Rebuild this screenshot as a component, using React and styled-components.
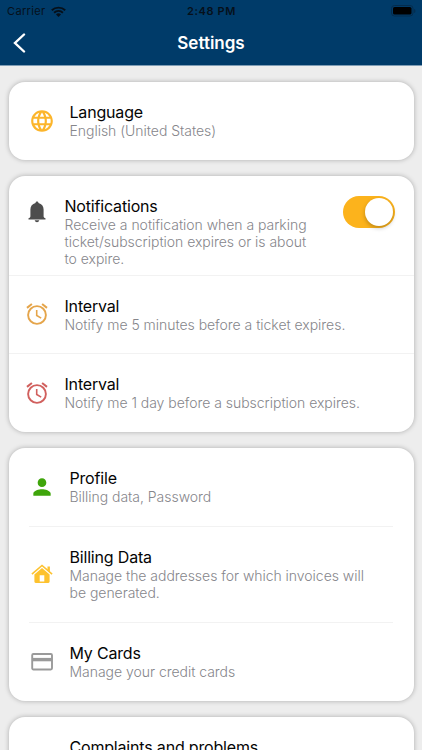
import React, { useState } from 'react';
import styled, { createGlobalStyle } from 'styled-components';
import { MdLanguage, MdPerson } from 'react-icons/md';

const GlobalStyle = createGlobalStyle`
  * {
    box-sizing: border-box;
  }

  body {
    margin: 0;
    background: #ededed;
    font-family: Inter, 'Liberation Sans', sans-serif;
  }
`;

const Screen = styled.div`
  height: 750px;
  overflow: hidden;
  background: #ededed;
`;

const Header = styled.header`
  height: 66px;
  background: #003b69;
  border-bottom: 1px solid #7f9db5;
`;

const StatusBar = styled.div`
  display: grid;
  grid-template-columns: 1fr auto 1fr;
  align-items: center;
  height: 22px;
  padding: 0 6px 0 7px;
  font-size: 11px;
  color: #06101a;
`;

const Carrier = styled.div`
  display: flex;
  align-items: center;
  gap: 5px;
  letter-spacing: 0.35px;
`;

const Time = styled.div`
  font-weight: 600;
  letter-spacing: 0.6px;
`;

const Battery = styled.svg`
  justify-self: end;
`;

const NavBar = styled.div`
  display: grid;
  grid-template-columns: 1fr auto 1fr;
  align-items: center;
  height: 42px;
  padding: 0 13px;
`;

const BackButton = styled.button`
  display: flex;
  width: 13px;
  padding: 0;
  border: none;
  background: none;
  cursor: pointer;
`;

const PageTitle = styled.h1`
  margin: 0;
  font-size: 17px;
  font-weight: 600;
  color: white;
`;

const Content = styled.main`
  display: flex;
  flex-direction: column;
  gap: 16px;
  padding: 16px 8.5px;
`;

const Card = styled.section`
  flex: none;
  border-radius: 16px;
  background: white;
  box-shadow: 0 0 5px rgba(0, 0, 0, 0.28);
`;

const Row = styled.div`
  display: flex;
  height: ${(props) => props.$height}px;
  margin: 0 ${(props) => (props.$inset ? '21px 0 20px' : '0')};
  padding: 20px ${(props) => (props.$inset ? 0 : 18.5)}px 0 ${(props) => (props.$inset ? 1 : 16)}px;
  border-bottom: ${(props) => (props.$divider ? '1px solid #f2f2f2' : 'none')};
`;

const IconBox = styled.div`
  flex: none;
  display: flex;
  justify-content: center;
  width: 24px;
  margin-right: 16px;
  padding-top: ${(props) => props.$top}px;
  color: ${(props) => props.$color};

  svg {
    flex: none;
  }
`;

const Label = styled.div`
  font-size: 16px;
  line-height: 20px;
  letter-spacing: -0.18px;
  color: #050505;
`;

const Description = styled.div`
  width: ${(props) => (props.$width ? `${props.$width}px` : 'auto')};
  font-size: 14px;
  font-weight: 300;
  line-height: 17px;
  letter-spacing: -0.03px;
  color: #86868b;
`;

const Toggle = styled.button`
  flex: none;
  display: flex;
  justify-content: ${(props) => (props.$on ? 'flex-end' : 'flex-start')};
  width: 52px;
  height: 32px;
  margin-left: auto;
  padding: 2px;
  border: none;
  border-radius: 16px;
  background: ${(props) => (props.$on ? '#fcb31c' : '#e5e5ea')};
  cursor: pointer;
`;

const Knob = styled.span`
  width: 28px;
  height: 28px;
  border-radius: 50%;
  background: white;
  box-shadow: 0 2px 4px rgba(0, 0, 0, 0.25);
`;

const WifiIcon = () => (
  <svg width="15" height="11" viewBox="0 0 15 11" fill="none" stroke="currentColor" strokeWidth="1.9">
    <path d="M0.8 4.3a9.6 9.6 0 0 1 13.4 0" />
    <path d="M3.1 6.7a6.3 6.3 0 0 1 8.8 0" />
    <path d="M7.5 11 5 8.5a3.6 3.6 0 0 1 5 0z" fill="currentColor" stroke="none" />
  </svg>
);

const BatteryIcon = () => (
  <Battery width="25" height="12" viewBox="0 0 25 12">
    <rect x="0.5" y="0.5" width="21.5" height="10.5" rx="3" fill="none" stroke="#042c4d" />
    <rect x="2" y="2" width="18.5" height="7.5" rx="1.6" fill="#000" />
    <path d="M23.2 4v4c.8-.4 1.2-1 1.2-2s-.4-1.6-1.2-2z" fill="#042c4d" />
  </Battery>
);

const BellIcon = () => (
  <svg width="18" height="22" viewBox="0 0 18 22" fill="currentColor">
    <path d="M9 .4c.9 0 1.5.6 1.5 1.6 3.200.8 5.100 3.200 5.100 6.600v6.600c0 1.200.7 1.600 1.900 2.100v1.200H.5v-1.200c1.200-.5 1.900-.9 1.900-2.100V8.600c0-3.400 1.900-5.800 5.100-6.600C7.500 1 8.100.4 9 .4z" />
    <path d="M6.700 19.300h4.600c-.3 1.200-1.200 1.900-2.300 1.900s-2-.7-2.300-1.900z" />
  </svg>
);

const AlarmIcon = () => (
  <svg width="22" height="22" viewBox="0 0 22 22" fill="none" stroke="currentColor">
    <circle cx="11" cy="12" r="8.9" strokeWidth="1.9" />
    <path d="M10.700 7v5.500l4.500 2.600" strokeWidth="1.600" />
    <path d="M1 4.900 5.900 1M21 4.900 16.100 1" strokeWidth="2" />
  </svg>
);

const HomeIcon = () => (
  <svg width="22" height="20" viewBox="0 0 22 20" fill="currentColor">
    <path d="M.9 10.200 11 1.500l10.100 8.700" fill="none" stroke="currentColor" strokeWidth="1.600" />
    <path d="M16.500 2.500h2.400v5.300l-2.400-2.100z" />
    <path
      fillRule="evenodd"
      d="M3.400 10.600 11 4l7.600 6.600v7c0 .8-.5 1.300-1.300 1.300H4.700c-.8 0-1.300-.5-1.300-1.300zM8.700 11.200v6.400h4.600v-6.400z"
    />
  </svg>
);

const CardIcon = () => (
  <svg width="22" height="18" viewBox="0 0 22 18" fill="none" stroke="currentColor">
    <rect x="1.200" y="1" width="19.800" height="15.500" rx="1.200" strokeWidth="1.900" />
    <path d="M1 6.600h20" strokeWidth="3.400" />
  </svg>
);

const SettingRow = ({ icon, color, iconTop = 0, label, text, width, children, ...row }) => (
  <Row $height={row.height} $inset={row.inset} $divider={row.divider}>
    <IconBox $color={color} $top={iconTop}>{icon}</IconBox>
    <div>
      <Label>{label}</Label>
      {text && <Description $width={width}>{text}</Description>}
    </div>
    {children}
  </Row>
);

const App = () => {
  const [notify, setNotify] = useState(true);

  return (
    <Screen>
      <GlobalStyle />
      <Header>
        <StatusBar>
          <Carrier>
            Carrier
            <WifiIcon />
          </Carrier>
          <Time>2:48 PM</Time>
          <BatteryIcon />
        </StatusBar>
        <NavBar>
          <BackButton aria-label="Back">
            <svg width="13" height="20" viewBox="0 0 13 20" fill="none" stroke="white" strokeWidth="2.4" strokeLinecap="round">
              <path d="M11 1.500 2 10l9 8.500" />
            </svg>
          </BackButton>
          <PageTitle>Settings</PageTitle>
        </NavBar>
      </Header>
      <Content>
        <Card>
          <SettingRow
            height={77.5}
            inset
            icon={<MdLanguage size={26} />}
            color="#fcb52b"
            iconTop={6}
            label="Language"
            text="English (United States)"
          />
        </Card>
        <Card>
          <SettingRow
            height={100}
            divider
            icon={<BellIcon />}
            color="#4d4d4d"
            iconTop={5}
            label="Notifications"
            text="Receive a notification when a parking ticket/subscription expires or is about to expire."
            width={255}
          >
            <Toggle $on={notify} onClick={() => setNotify(!notify)} aria-label="Notifications">
              <Knob />
            </Toggle>
          </SettingRow>
          <SettingRow
            height={78}
            divider
            icon={<AlarmIcon />}
            color="#e5a54b"
            iconTop={7.5}
            label="Interval"
            text="Notify me 5 minutes before a ticket expires."
          />
          <SettingRow
            height={78.5}
            icon={<AlarmIcon />}
            color="#d1605e"
            iconTop={8}
            label="Interval"
            text="Notify me 1 day before a subscription expires."
          />
        </Card>
        <Card>
          <SettingRow
            height={78.5}
            inset
            divider
            icon={<MdPerson size={26} />}
            color="#3fa50b"
            iconTop={6}
            label="Profile"
            text="Billing data, Password"
          />
          <SettingRow
            height={96}
            inset
            divider
            icon={<HomeIcon />}
            color="#fdc22f"
            iconTop={17}
            label="Billing Data"
            text="Manage the addresses for which invoices will be generated."
            width={305}
          />
          <SettingRow
            height={78}
            inset
            icon={<CardIcon />}
            color="#9a9a9a"
            iconTop={10}
            label="My Cards"
            text="Manage your credit cards"
          />
        </Card>
        <Card>
          <SettingRow height={78} inset label="Complaints and problems" />
        </Card>
      </Content>
    </Screen>
  );
};

export default App;
